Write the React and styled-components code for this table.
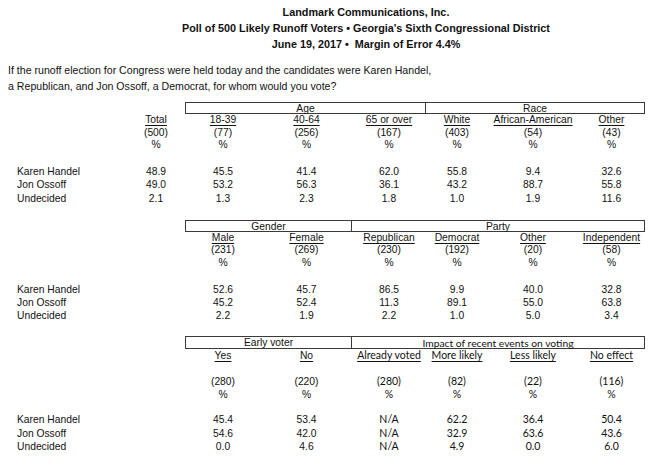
import React from 'react';
import styled, { createGlobalStyle } from 'styled-components';

const GlobalStyle = createGlobalStyle`
    body {
        margin: 0;
        background: #fff;
        color: #111;
        font-family: "Liberation Sans", Arial, sans-serif;
    }
`;

const Page = styled.div`
    width: 662px;
    height: 475px;
    padding-top: 4px;
    box-sizing: border-box;
    overflow: hidden;
`;

const Heading = styled.div`
    padding-left: 70px;
    text-align: center;
    font-weight: bold;
    font-size: 10.8px;
    line-height: 16px;
`;

const Question = styled.div`
    margin: 10px 0 8px 8px;
    font-size: 10.6px;
    line-height: 16px;
`;

const Row = styled.div`
    display: grid;
    grid-template-columns: 127px 58px 76px 91px 74px 62px 90px 67px;
    height: ${p => p.$h || 12.7}px;
    line-height: ${p => p.$h || 12.7}px;
    font-size: 10.3px;
    margin-top: ${p => p.$gap || 0}px;
`;

const Label = styled.div`
    padding-left: 17px;
    white-space: nowrap;
`;

const Cell = styled.div`
    text-align: center;
    white-space: nowrap;
    font-family: ${p => p.$alt ? '"Lato", "Open Sans", sans-serif' : 'inherit'};
    font-size: ${p => p.$alt ? '10.5px' : 'inherit'};
`;

const ColName = styled(Cell)`
    text-decoration: underline;
    text-underline-offset: 1.5px;
`;

const GroupBox = styled.div`
    grid-column: span ${p => p.$span};
    border: 1px solid #3a3a3a;
    border-left-width: ${p => p.$first ? 1 : 0}px;
    height: ${p => p.$h - 2}px;
    line-height: ${p => p.$h - 1}px;
    text-align: center;
    white-space: nowrap;
    font-family: ${p => p.$alt ? '"Lato", "Open Sans", sans-serif' : 'inherit'};
    font-size: ${p => p.$alt ? '10.3px' : 'inherit'};
`;

const names = ['Karen Handel', 'Jon Ossoff', 'Undecided'];

const sections = [
    {
        top: 0,
        total: true,
        groups: [{ name: 'Age', span: 3 }, { name: 'Race', span: 3 }],
        cols: [
            ['Total', '(500)'], ['18-39', '(77)'], ['40-64', '(256)'], ['65 or over', '(167)'],
            ['White', '(403)'], ['African-American', '(54)'], ['Other', '(43)']
        ],
        data: [
            ['48.9', '45.5', '41.4', '62.0', '55.8', '9.4', '32.6'],
            ['49.0', '53.2', '56.3', '36.1', '43.2', '88.7', '55.8'],
            ['2.1', '1.3', '2.3', '1.8', '1.0', '1.9', '11.6']
        ]
    },
    {
        top: 14.7,
        groups: [{ name: 'Gender', span: 2 }, { name: 'Party', span: 4 }],
        cols: [
            ['Male', '(231)'], ['Female', '(269)'], ['Republican', '(230)'],
            ['Democrat', '(192)'], ['Other', '(20)'], ['Independent', '(58)']
        ],
        data: [
            ['52.6', '45.7', '86.5', '9.9', '40.0', '32.8'],
            ['45.2', '52.4', '11.3', '89.1', '55.0', '63.8'],
            ['2.2', '1.9', '2.2', '1.0', '5.0', '3.4']
        ]
    },
    {
        top: 13.7,
        spaced: true,
        groups: [{ name: 'Early voter', span: 2 }, { name: 'Impact of recent events on voting', span: 4, alt: true }],
        cols: [
            ['Yes', '(280)'], ['No', '(220)'], ['Already voted', '(280)', true],
            ['More likely', '(82)', true], ['Less likely', '(22)', true], ['No effect', '(116)', true]
        ],
        data: [
            ['45.4', '53.4', 'N/A', '62.2', '36.4', '50.4'],
            ['54.6', '42.0', 'N/A', '32.9', '63.6', '43.6'],
            ['0.0', '4.6', 'N/A', '4.9', '0.0', '6.0']
        ]
    }
];

function Section({ section }) {
    const { top, total, groups, cols, data, spaced } = section;
    const lead = total ? [<Label key="l" />] : [<Label key="l" />, <Cell key="t" />];
    const isAlt = (i) => cols[i] && cols[i][2];
    const boxH = spaced ? 13 : 12;
    const rowH = spaced ? 13 : 12.7;
    return (
        <>
            <Row $gap={top} $h={boxH}>
                <Label />
                <Cell />
                {groups.map((g, i) => (
                    <GroupBox key={g.name} $span={g.span} $first={i === 0} $alt={g.alt} $h={boxH}>
                        {g.name}
                    </GroupBox>
                ))}
            </Row>
            <Row $h={rowH}>
                {lead}
                {cols.map(([name], i) => <ColName key={name + i} $alt={isAlt(i)}>{name}</ColName>)}
            </Row>
            {spaced && <Row $h={rowH} />}
            <Row $h={rowH}>
                {lead}
                {cols.map(([, n], i) => <Cell key={i} $alt={isAlt(i)}>{n}</Cell>)}
            </Row>
            <Row $h={rowH}>
                {lead}
                {cols.map((c, i) => <Cell key={i} $alt={isAlt(i)}>%</Cell>)}
            </Row>
            {data.map((values, r) => (
                <Row key={names[r]} $h={13.3} $gap={r === 0 ? (spaced ? 12 : 13) : 0}>
                    <Label>{names[r]}</Label>
                    {!total && <Cell />}
                    {values.map((v, i) => <Cell key={i} $alt={isAlt(i)}>{v}</Cell>)}
                </Row>
            ))}
        </>
    );
}

export default function App() {
    return (
        <Page>
            <GlobalStyle />
            <Heading>
                <div>Landmark Communications, Inc.</div>
                <div>Poll of 500 Likely Runoff Voters • Georgia's Sixth Congressional District</div>
                <div>June 19, 2017 •&nbsp; Margin of Error 4.4%</div>
            </Heading>
            <Question>
                If the runoff election for Congress were held today and the candidates were Karen Handel,<br />
                a Republican, and Jon Ossoff, a Democrat, for whom would you vote?
            </Question>
            {sections.map((s, i) => <Section key={i} section={s} />)}
        </Page>
    );
}
